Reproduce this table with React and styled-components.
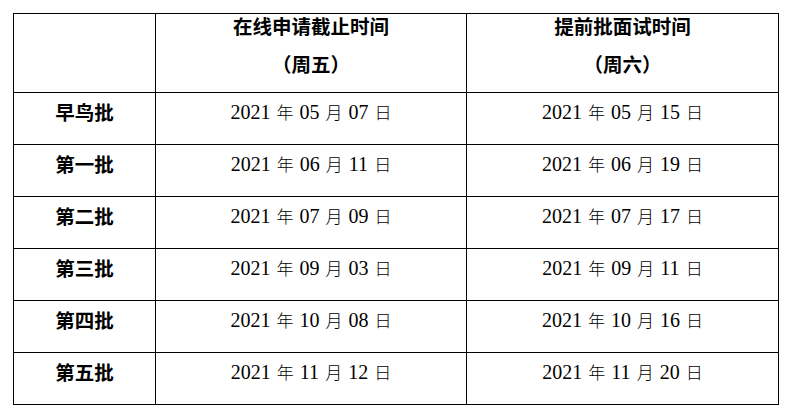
import styled, { createGlobalStyle } from 'styled-components';

const GlobalStyle = createGlobalStyle`
	html, body {
		margin: 0;
		padding: 0;
		background: #ffffff;
	}
	body {
		font-family: 'Liberation Serif', 'Noto Sans CJK SC', serif;
		color: #000000;
	}
`;

const batches = [
	{ name: '早鸟批', apply: ['05', '07'], interview: ['05', '15'] },
	{ name: '第一批', apply: ['06', '11'], interview: ['06', '19'] },
	{ name: '第二批', apply: ['07', '09'], interview: ['07', '17'] },
	{ name: '第三批', apply: ['09', '03'], interview: ['09', '11'] },
	{ name: '第四批', apply: ['10', '08'], interview: ['10', '16'] },
	{ name: '第五批', apply: ['11', '12'], interview: ['11', '20'] },
];

const DateText = ({ value }) => (
	<>
		2021 <Han>年</Han> {value[0]} <Han>月</Han> {value[1]} <Han>日</Han>
	</>
);

const App = () => {
	return (
		<>
			<GlobalStyle />
			<Page>
				<Table>
					<HeadCell />
					<HeadCell>
						<HeadLine>在线申请截止时间</HeadLine>
						<HeadLine second>（周五）</HeadLine>
					</HeadCell>
					<HeadCell>
						<HeadLine>提前批面试时间</HeadLine>
						<HeadLine second>（周六）</HeadLine>
					</HeadCell>
					{batches.map(batch => (
						<Row key={batch.name}>
							<NameCell>{batch.name}</NameCell>
							<DateCell>
								<DateText value={batch.apply} />
							</DateCell>
							<DateCell>
								<DateText value={batch.interview} />
							</DateCell>
						</Row>
					))}
				</Table>
			</Page>
		</>
	);
};

export default App;

const Page = styled.div`
	padding: 13px 0 0 13px;
`;

const Table = styled.div`
	display: grid;
	grid-template-columns: 141px 310px 311px;
	grid-template-rows: 78px repeat(6, 51px);
	gap: 1px;
	padding: 1px;
	width: max-content;
	background: #000000;
`;

const Row = styled.div`
	display: contents;
`;

const Cell = styled.div`
	background: #ffffff;
	text-align: center;
	white-space: nowrap;
`;

const HeadCell = styled(Cell)`
	font-family: 'Noto Sans CJK SC', sans-serif;
	font-size: 19.5px;
	font-weight: 700;
`;

const HeadLine = styled.div`
	line-height: 24px;
	margin-top: ${props => (props.second ? '14px' : '0')};
`;

const NameCell = styled(Cell)`
	padding-top: 7px;
	line-height: 24px;
	font-family: 'Noto Sans CJK SC', sans-serif;
	font-size: 19.5px;
	font-weight: 700;
`;

const DateCell = styled(Cell)`
	padding-top: 7px;
	line-height: 24px;
	font-size: 20px;
	word-spacing: 1px;
`;

const Han = styled.span`
	font-family: 'Noto Sans CJK SC', sans-serif;
	font-size: 17px;
	font-weight: 300;
`;
